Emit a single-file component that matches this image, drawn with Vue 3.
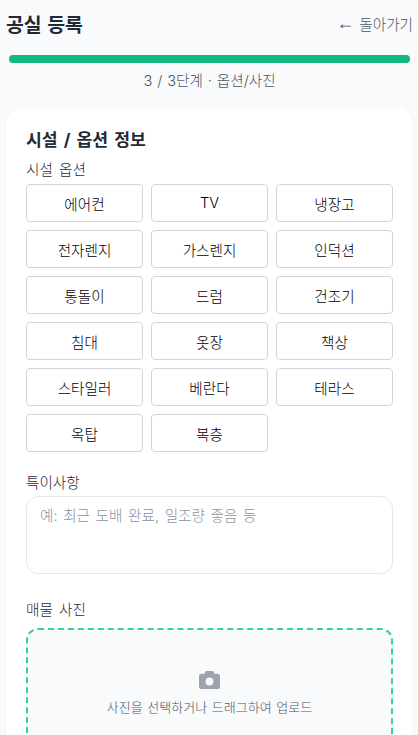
<script setup>
const options = [
    "에어컨", "TV", "냉장고",
    "전자렌지", "가스렌지", "인덕션",
    "통돌이", "드럼", "건조기",
    "침대", "옷장", "책상",
    "스타일러", "베란다", "테라스",
    "옥탑", "복층",
];
</script>
<template>
    <div class="page">
        <div class="header">
            <h1 class="title">공실 등록</h1>
            <button class="back"><span class="arrow">←</span> 돌아가기</button>
        </div>
        <div class="progress"><div class="progress-fill"></div></div>
        <div class="step">3 / 3단계 · 옵션/사진</div>
        <div class="card">
            <h2 class="card-title">시설 / 옵션 정보</h2>
            <div class="label">시설 옵션</div>
            <div class="options">
                <button v-for="option in options" :key="option" class="option">{{ option }}</button>
            </div>
            <div class="label memo-label">특이사항</div>
            <textarea class="memo" placeholder="예: 최근 도배 완료, 일조량 좋음 등"></textarea>
            <div class="label photo-label">매물 사진</div>
            <div class="dropzone">
                <svg class="camera" viewBox="0 32 512 448" width="21" height="18.4">
                    <path fill="#9ca3af" d="M149.1 64.8L138.7 96H64C28.7 96 0 124.7 0 160V416c0 35.3 28.7 64 64 64H448c35.3 0 64-28.7 64-64V160c0-35.3-28.7-64-64-64H373.3L362.9 64.8C356.4 45.2 338.1 32 317.4 32H194.6c-20.7 0-39 13.2-45.5 32.8zM256 192a96 96 0 1 1 0 192 96 96 0 1 1 0-192z"/>
                </svg>
                <div class="drop-text">사진을 선택하거나 드래그하여 업로드</div>
            </div>
        </div>
    </div>
</template>
<style scoped>
.page {
    padding: 0 5px 24px 6px;
    font-family: Inter, "Noto Sans CJK KR", sans-serif;
    font-weight: 300;
    color: #1f2937;
}

.header {
    display: flex;
    justify-content: space-between;
    align-items: center;
    height: 55px;
    padding-bottom: 8px;
    box-sizing: border-box;
}

.title {
    margin: 0;
    font-size: 19.4px;
    font-weight: 700;
    word-spacing: 1px;
    color: #1f2937;
}

.back {
    display: flex;
    align-items: center;
    gap: 5px;
    padding: 0;
    border: none;
    background: none;
    font-family: inherit;
    font-size: 14.6px;
    font-weight: 300;
    color: #4b5563;
}

.arrow {
    margin-top: -2px;
    font-family: "Liberation Sans", sans-serif;
    font-size: 18px;
    line-height: 18px;
}

.progress {
    height: 8px;
    margin: 0 3px;
    border-radius: 4px;
    background-color: #e5e7eb;
}

.progress-fill {
    height: 100%;
    border-radius: 4px;
    background-color: #10b981;
}

.step {
    margin-top: 10px;
    font-size: 14.6px;
    line-height: 17px;
    word-spacing: 0.8px;
    text-align: center;
    color: #4b5563;
}

.card {
    margin-top: 18px;
    padding: 20px;
    border-radius: 16px;
    background-color: #ffffff;
    box-shadow: 0 1px 3px rgba(0, 0, 0, 0.05);
}

.card-title {
    margin: 0 0 8px;
    font-size: 17.2px;
    line-height: 24px;
    font-weight: 700;
    word-spacing: 2px;
    color: #1f2937;
}

.label {
    font-size: 14.6px;
    line-height: 20px;
    word-spacing: 2px;
    color: #1f2937;
}

.options {
    display: grid;
    grid-template-columns: repeat(3, 1fr);
    gap: 8px;
    margin-top: 4px;
}

.option {
    height: 38px;
    border: 1px solid #d1d5db;
    border-radius: 4px;
    background-color: #ffffff;
    font-family: inherit;
    font-size: 14.6px;
    font-weight: 300;
    color: #000000;
}

.memo-label {
    margin-top: 21px;
}

.memo {
    display: block;
    box-sizing: border-box;
    width: 100%;
    height: 78px;
    margin-top: 3px;
    padding: 9px 13px;
    border: 1px solid #e5e7eb;
    border-radius: 12px;
    outline: none;
    resize: none;
    font-family: inherit;
    font-size: 14.6px;
    font-weight: 300;
    line-height: 20px;
    word-spacing: 1.5px;
}

.memo::placeholder {
    color: #8b93a1;
}

.photo-label {
    margin-top: 26px;
}

.dropzone {
    display: flex;
    flex-direction: column;
    align-items: center;
    height: 170px;
    margin-top: 8px;
    padding-top: 41px;
    box-sizing: border-box;
    border: 2px dashed #34d399;
    border-radius: 12px;
    background-color: #f9fafb;
}

.drop-text {
    margin-top: 9px;
    font-size: 13px;
    line-height: 18px;
    word-spacing: 1px;
    color: #4b5563;
}
</style>
<style>
html,
body {
    background-color: #f9fafb;
    overflow: hidden;
}
</style>
